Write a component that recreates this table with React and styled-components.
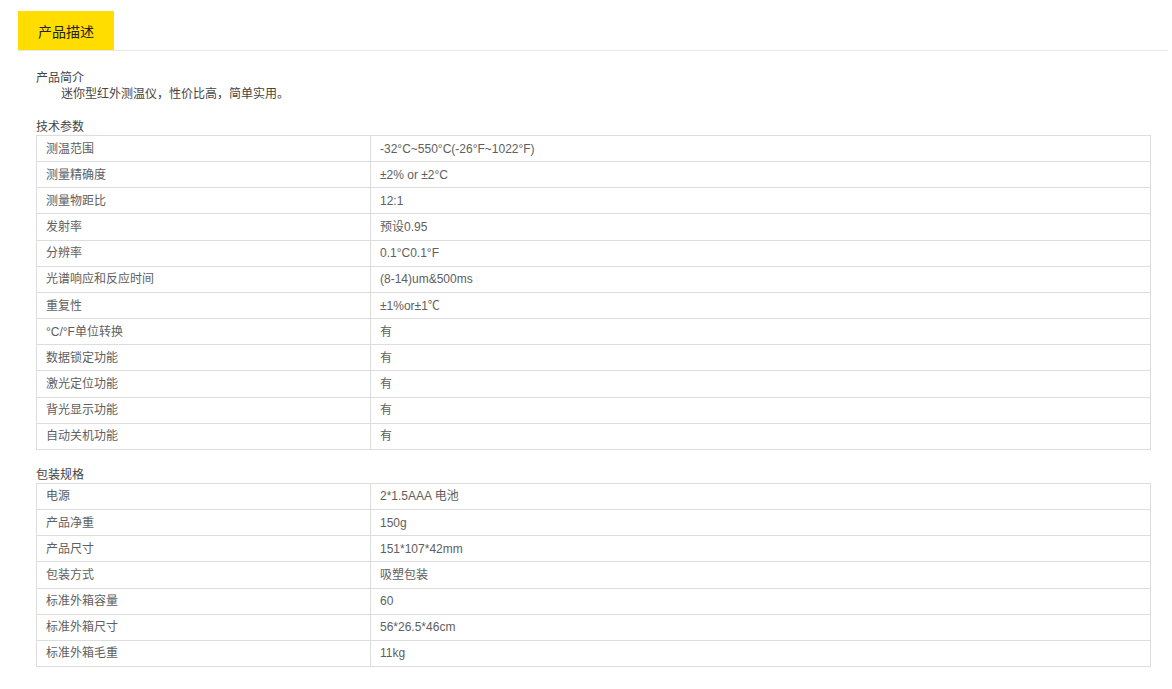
import React from "react";
import styled, { createGlobalStyle } from "styled-components";

const GlobalStyle = createGlobalStyle`
  body {
    margin: 0;
    background: #fff;
    font-family: "Liberation Sans", Arial, "Noto Sans CJK SC", sans-serif;
  }
`;

const Page = styled.div`
  padding: 11px 4px 0 18px;
`;

const TabBar = styled.div`
  display: flex;
  border-bottom: 1px solid #e8e8e8;
`;

const Tab = styled.div`
  width: 96px;
  height: 39px;
  background: #ffdd00;
  color: #222;
  font-size: 14px;
  display: flex;
  align-items: center;
  justify-content: center;
`;

const Content = styled.div`
  padding: 19px 17px 20px 18px;
  font-size: 12px;
  color: #444;
`;

const Section = styled.div`
  margin-bottom: 17px;
`;

const Title = styled.div`
  height: 16px;
  line-height: 16px;
  overflow: hidden;
`;

const Intro = styled.div`
  height: 16px;
  line-height: 16px;
  padding-left: 25px;
`;

const Table = styled.table`
  width: 100%;
  border-collapse: collapse;
  color: #606060;
  font-size: 12px;
`;

const Cell = styled.td`
  border: 1px solid #ddd;
  height: 25.17px;
  padding: 0 9px;
  line-height: 16px;
  width: ${p => (p.$label ? "315px" : "auto")};
`;

const specs = [
  ["测温范围", "-32°C~550°C(-26°F~1022°F)"],
  ["测量精确度", "±2% or ±2°C"],
  ["测量物距比", "12:1"],
  ["发射率", "预设0.95"],
  ["分辨率", "0.1°C0.1°F"],
  ["光谱响应和反应时间", "(8-14)um&500ms"],
  ["重复性", "±1%or±1℃"],
  ["°C/°F单位转换", "有"],
  ["数据锁定功能", "有"],
  ["激光定位功能", "有"],
  ["背光显示功能", "有"],
  ["自动关机功能", "有"],
];

const packing = [
  ["电源", "2*1.5AAA 电池"],
  ["产品净重", "150g"],
  ["产品尺寸", "151*107*42mm"],
  ["包装方式", "吸塑包装"],
  ["标准外箱容量", "60"],
  ["标准外箱尺寸", "56*26.5*46cm"],
  ["标准外箱毛重", "11kg"],
];

const SpecTable = ({ rows }) => (
  <Table>
    <tbody>
      {rows.map(([k, v]) => (
        <tr key={k}>
          <Cell $label>{k}</Cell>
          <Cell>{v}</Cell>
        </tr>
      ))}
    </tbody>
  </Table>
);

export default function App() {
  return (
    <Page>
      <GlobalStyle />
      <TabBar>
        <Tab>产品描述</Tab>
      </TabBar>
      <Content>
        <Section>
          <Title>产品简介</Title>
          <Intro>迷你型红外测温仪，性价比高，简单实用。</Intro>
        </Section>
        <Section>
          <Title>技术参数</Title>
          <SpecTable rows={specs} />
        </Section>
        <Section>
          <Title>包装规格</Title>
          <SpecTable rows={packing} />
        </Section>
      </Content>
    </Page>
  );
}
